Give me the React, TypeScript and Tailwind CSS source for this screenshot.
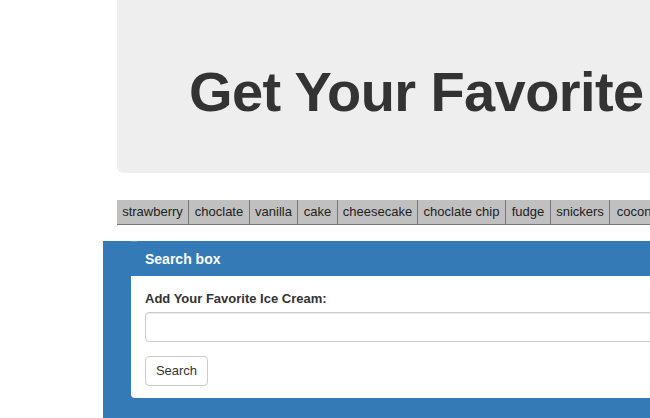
import React from "react";

const tags = [
  { t: "strawberry", w: 72 },
  { t: "choclate", w: 61 },
  { t: "vanilla", w: 48 },
  { t: "cake", w: 40 },
  { t: "cheesecake", w: 80 },
  { t: "choclate chip", w: 88 },
  { t: "fudge", w: 45 },
  { t: "snickers", w: 59 },
  { t: "coconut", w: 60 },
];

export default function App() {
  return (
    <div
      className="w-[650px] h-[418px] overflow-hidden bg-white text-[#333]"
      style={{ fontFamily: '"Liberation Sans", Arial, sans-serif' }}
    >
      <div className="ml-[117px] w-[700px] h-[173px] bg-[#eeeeee] rounded-bl-[6px] flex items-start">
        <h1 className="mt-[64px] ml-[72px] text-[56px] leading-[56px] font-bold tracking-[-0.6px] whitespace-nowrap text-[#333]">
          Get Your Favorite Ice Cream
        </h1>
      </div>

      <div className="ml-[117px] mt-[27px] flex w-[700px] h-[25px]">
        {tags.map((x) => (
          <div
            key={x.t}
            className="shrink-0 h-[25px] bg-[#c0c0c0] border-r border-b border-[#777] flex items-center justify-center text-[13px] text-[#222] whitespace-nowrap"
            style={{ width: x.w }}
          >
            {x.t}
          </div>
        ))}
      </div>

      <div className="ml-[103px] mt-[16px] w-[700px] h-[200px] bg-[#337ab7] relative">
        <div className="absolute left-[28px] top-0 w-[6px] h-px bg-[#5a93c6]" />
        <div className="h-[35px] pl-[42px] pt-px flex items-center text-white font-bold text-[14px]">
          Search box
        </div>
        <div className="ml-[28px] bg-white h-[122px] rounded-bl-[4px] pl-[14px] pt-[15px]">
          <div className="text-[13px] font-bold text-[#333] leading-[15px]">
            Add Your Favorite Ice Cream:
          </div>
          <div className="mt-[6px] h-[30px] w-[600px] border border-[#ccc] rounded-[4px] shadow-[inset_0_1px_1px_rgba(0,0,0,0.075)]" />
          <button className="mt-[14px] h-[30px] w-[63px] border border-[#ccc] rounded-[4px] bg-white text-[13px] text-[#333]">
            Search
          </button>
        </div>
      </div>
    </div>
  );
}
